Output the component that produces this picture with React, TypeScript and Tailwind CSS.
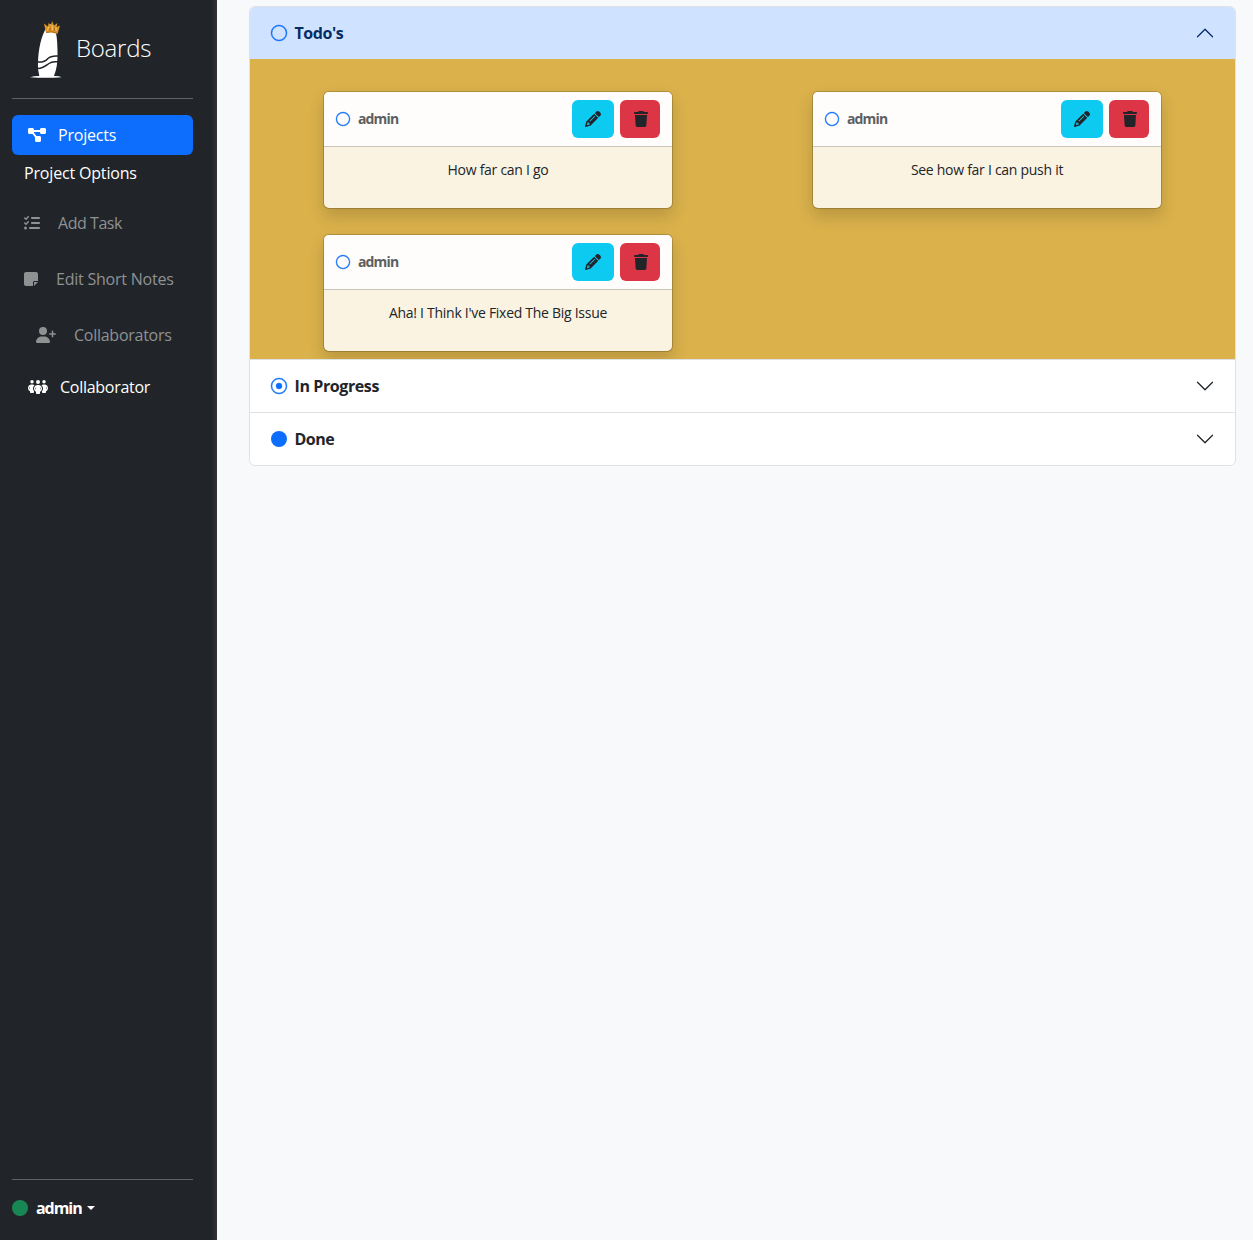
import React from "react";
import { FaDiagramProject, FaListCheck, FaNoteSticky, FaUserPlus, FaPeopleGroup, FaPencil, FaTrash } from "react-icons/fa6";
import { BsCircle, BsRecordCircle, BsCircleFill, BsChevronDown, BsChevronUp } from "react-icons/bs";

function Logo() {
  return (
    <svg width="40" height="60" viewBox="0 0 40 60" className="shrink-0">
      <path d="M15 11C10 21 7.500 35 8 50L9.500 58H23.500C26 52 27.500 46 27.500 36C27.500 25 27 18 25.500 12L20.500 5Z" fill="#fff" />
      <path d="M0 58.300Q5 56.600 10 57H23Q29 56.600 31.500 58.300Q16 59.300 0 58.300Z" fill="#fff" />
      <path d="M7 43C12 43.500 15 43 18 39.500C21 36.800 24 37.200 28 37M8 49.500C13 49.500 16 46.500 19 44.500C22 42.500 24 43 28 42.500" fill="none" stroke="#212529" strokeWidth="1.500" />
      <path d="M16 14L14 4.500L18 7.500L18.500 4L21 6L22 2L24 6.500L27.500 4L26.500 8L30 6.500L27.500 15Q21.500 12 16 14Z" fill="#dc9426" />
      <path d="M17.500 11.500L18.500 8M22 6L22.500 11M26 8.500L26 12" fill="none" stroke="#f8cf74" strokeWidth=".9" />
      <path d="M16.500 13.500Q21.500 11.800 27.500 14.500M20 9V11.500M24.500 9V12" fill="none" stroke="#96530f" strokeWidth=".7" />
    </svg>
  );
}

function TaskCard({ text }: { text: string }) {
  return (
    <article className="h-[118px] w-[350px] overflow-hidden rounded-md border border-black/[0.175] bg-[#faf3e2] bg-clip-padding shadow-[0_8px_16px_rgba(0,0,0,0.15)]">
      <header className="flex h-[55px] items-center border-b border-[#cbc6b9] bg-[#fffdfc] px-3">
        <BsCircle size={14} strokeWidth={0.4} className="ml-[0.4px] mr-[7.6px] overflow-visible text-[#0d6efd]" />
        <span className="text-sm font-bold tracking-[-0.85px] text-[#5c5f62]">admin</span>
        <button className="ml-auto flex h-[38px] w-[42px] items-center justify-center rounded-md bg-[#0dcaf0] text-[#212529]">
          <FaPencil size={16} />
        </button>
        <button className="ml-1.5 flex h-[38px] w-10 items-center justify-center rounded-md bg-[#dc3545] pl-px text-[#212529]">
          <FaTrash size={16} />
        </button>
      </header>
      <p className="pt-3 text-center text-sm leading-[21px] tracking-[-0.28px] text-[#212529]">{text}</p>
    </article>
  );
}

export default function App() {
  return (
    <div className="flex h-[1240px] w-[1253px] bg-[#f8f9fb] font-['Open_Sans',sans-serif] text-base text-[#212529]">
      <aside className="flex w-[217px] shrink-0 flex-col bg-[#212529] bg-[linear-gradient(to_right,transparent_212px,#3a3033_217px)] pl-3 text-white">
        <div className="flex h-[98px] items-center pl-[18px]">
          <Logo />
          <span className="-mt-0.5 ml-1.5 text-2xl font-light tracking-[-0.25px]">Boards</span>
        </div>
        <div className="h-px w-[181px] bg-[#5f6265]" />
        <nav className="flex w-[181px] flex-col font-normal">
          <a className="mt-4 flex h-10 items-center rounded-md bg-[#0d6efd] pl-4">
            <FaDiagramProject size={16} className="w-[18px]" />
            <span className="ml-3 tracking-[-0.22px]">Projects</span>
          </a>
          <span className="mt-1.5 pl-3 leading-6 tracking-[-0.17px]">Project Options</span>
          <a className="mt-[26px] flex h-6 items-center pl-3 text-[#8f9193]">
            <FaListCheck size={16} />
            <span className="ml-[18px] tracking-[-0.45px]">Add Task</span>
          </a>
          <a className="mt-8 flex h-6 items-center pl-3 text-[#8f9193]">
            <FaNoteSticky size={16} className="w-3.5" />
            <span className="ml-[18px] tracking-[-0.22px]">Edit Short Notes</span>
          </a>
          <a className="mt-8 flex h-6 items-center pl-6 text-[#8f9193]">
            <FaUserPlus size={16} className="w-5" />
            <span className="ml-[18px] tracking-[-0.26px]">Collaborators</span>
          </a>
          <a className="mt-7 flex h-6 items-center pl-4">
            <FaPeopleGroup size={16} className="w-5" />
            <span className="ml-3 tracking-[-0.28px]">Collaborator</span>
          </a>
        </nav>
        <div className="mt-auto h-px w-[181px] shrink-0 bg-[#5f6265]" />
        <div className="flex h-[60px] shrink-0 items-center pb-1">
          <span className="size-4 rounded-full bg-[#198754]" />
          <span className="ml-2 font-bold tracking-[-1.05px]">admin</span>
          <span className="ml-[5px] border-x-4 border-t-4 border-x-transparent border-t-white" />
        </div>
      </aside>
      <main className="pl-8 pt-1.5">
        <div className="h-[460px] w-[987px] overflow-hidden rounded-md border border-[#dee2e6] bg-white">
          <div className="flex h-[52px] items-center bg-[#cfe2ff] px-5 text-[#052c65]">
            <BsCircle size={16} strokeWidth={0.4} className="ml-[0.5px] mr-2 overflow-visible text-[#0d6efd]" />
            <span className="font-bold tracking-[-0.45px]">Todo's</span>
            <BsChevronUp size={20} className="ml-auto" />
          </div>
          <div className="grid h-[300px] grid-cols-[350px_350px] content-start gap-x-[139px] gap-y-[25px] overflow-hidden bg-[#dab14b] pl-[73px] pt-8">
            <TaskCard text="How far can I go" />
            <TaskCard text="See how far I can push it" />
            <TaskCard text="Aha! I Think I've Fixed The Big Issue" />
          </div>
          <div className="flex h-[53px] items-center border-t border-[#dee2e6] px-5">
            <BsRecordCircle size={16} strokeWidth={0.4} className="ml-[0.5px] mr-2 overflow-visible text-[#0d6efd]" />
            <span className="font-bold tracking-[-0.4px]">In Progress</span>
            <BsChevronDown size={20} className="ml-auto" />
          </div>
          <div className="flex h-[53px] items-center border-t border-[#dee2e6] px-5">
            <BsCircleFill size={16} className="ml-[0.5px] mr-2 text-[#0d6efd]" />
            <span className="font-bold tracking-[-0.5px]">Done</span>
            <BsChevronDown size={20} className="ml-auto" />
          </div>
        </div>
      </main>
    </div>
  );
}
